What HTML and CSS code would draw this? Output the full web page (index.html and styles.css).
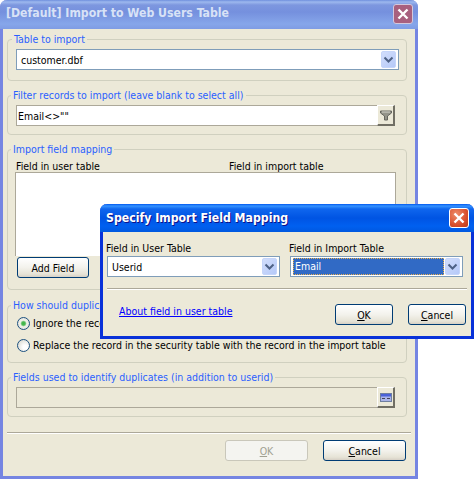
FILE: index.html
```html
<!DOCTYPE html>
<html lang="en">
<head>
<meta charset="utf-8">
<title>Import to Web Users Table</title>
<link rel="stylesheet" href="styles.css">
</head>
<body>
<div class="window">
  <header class="titlebar">
    <span class="title">[Default] Import to Web Users Table</span>
    <span class="close close-inactive"><svg width="14" height="14" viewBox="0 0 14 14"><path d="M2.5 2.5l9 9M11.5 2.5l-9 9" stroke="#fff" stroke-width="2.4" fill="none"/></svg></span>
  </header>
  <main class="content">
    <fieldset class="group g-table">
      <legend>Table to import</legend>
      <div class="combo combo-wide">
        <span class="value">customer.dbf</span>
        <span class="arrow"><svg width="11" height="8" viewBox="0 0 11 8"><path d="M1.5 1.5l4 4 4-4" stroke="#4d6185" stroke-width="2" fill="none"/></svg></span>
      </div>
    </fieldset>
    <fieldset class="group g-filter">
      <legend>Filter records to import (leave blank to select all)</legend>
      <div class="field">
        <span class="value">Email&lt;&gt;""</span>
        <span class="tool"><svg width="12" height="11" viewBox="0 0 12 11"><path d="M0.500 1h11v2L7.500 6v4h-3V6L0.500 3z" fill="#94948a" stroke="#66665e"/><path d="M2 2h8" stroke="#d6d6cc"/></svg></span>
      </div>
    </fieldset>
    <fieldset class="group g-map">
      <legend>Import field mapping</legend>
      <div class="map-head"><span class="map-col">Field in user table</span><span>Field in import table</span></div>
      <div class="listbox"></div>
      <button class="btn btn-add" type="button">Add Field</button>
    </fieldset>
    <fieldset class="group g-dup">
      <legend>How should duplicate records be handled?</legend>
      <label class="option"><input class="radio" type="radio" name="dup" checked>Ignore the record in the import table</label>
      <label class="option"><input class="radio" type="radio" name="dup">Replace the record in the security table with the record in the import table</label>
    </fieldset>
    <fieldset class="group g-fields">
      <legend>Fields used to identify duplicates (in addition to userid)</legend>
      <div class="field field-off">
        <span class="value"></span>
        <span class="tool"><svg width="12" height="9" viewBox="0 0 12 9"><rect x="0.500" y="0.500" width="11" height="8" fill="#aab4e8" stroke="#6f7f9f"/><rect x="1" y="1" width="10" height="2.500" fill="#4a62d8"/><path d="M2 5.500h3M7 5.500h3" stroke="#445" stroke-width="1"/></svg></span>
      </div>
    </fieldset>
    <div class="divider"></div>
    <div class="actions">
      <button class="btn btn-main" type="button" disabled><u>O</u>K</button>
      <button class="btn btn-main" type="button"><u>C</u>ancel</button>
    </div>
  </main>

  <section class="dialog">
    <header class="dlg-title">
      <span class="dlg-name">Specify Import Field Mapping</span>
      <span class="close close-active"><svg width="14" height="14" viewBox="0 0 14 14"><path d="M2.500 2.500l9 9M11.500 2.500l-9 9" stroke="#fff" stroke-width="2.400" fill="none"/></svg></span>
    </header>
    <div class="dlg-body">
      <div class="dlg-cols">
        <div class="dlg-col">
          <div class="dlg-label">Field in User Table</div>
          <div class="combo combo-dlg">
            <span class="value">Userid</span>
            <span class="arrow"><svg width="11" height="8" viewBox="0 0 11 8"><path d="M1.500 1.500l4 4 4-4" stroke="#4d6185" stroke-width="2" fill="none"/></svg></span>
          </div>
        </div>
        <div class="dlg-col">
          <div class="dlg-label">Field in Import Table</div>
          <div class="combo combo-dlg">
            <span class="value value-sel">Email</span>
            <span class="arrow"><svg width="11" height="8" viewBox="0 0 11 8"><path d="M1.500 1.500l4 4 4-4" stroke="#4d6185" stroke-width="2" fill="none"/></svg></span>
          </div>
        </div>
      </div>
      <div class="divider dlg-divider"></div>
      <div class="dlg-foot">
        <a class="link" href="#">About field in user table</a>
        <button class="btn btn-dlg" type="button"><u>O</u>K</button>
        <button class="btn btn-dlg" type="button"><u>C</u>ancel</button>
      </div>
    </div>
  </section>
</div>
</body>
</html>
```
FILE: styles.css
```css
* { box-sizing: border-box; }
html, body { margin: 0; padding: 0; background: #fff; }
body {
  width: 474px;
  height: 479px;
  overflow: hidden;
  font-family: "DejaVu Sans Condensed", "DejaVu Sans", sans-serif;
  font-stretch: condensed;
  font-size: 10.500px;
  line-height: 14px;
  color: #000;
}
.window {
  position: relative;
  width: 418px;
  height: 479px;
  background: #ecE9d8;
  border: 3px solid #7585e2;
  border-top: 0;
  border-radius: 7px 7px 0 0;
}
.titlebar {
  display: flex;
  align-items: center;
  justify-content: space-between;
  height: 29px;
  margin: 0 -3px;
  padding: 0 5px 3px 6px;
  border-radius: 7px 7px 0 0;
  background: linear-gradient(#6f8fdd 0, #9db8ee 2px, #7d97df 5px, #7590de 12px, #86a6ea 24px, #7f9ce4 29px);
}
.title {
  font-weight: bold;
  font-size: 12.200px;
  color: #d8e2f6;
}
.close {
  display: flex;
  align-items: center;
  justify-content: center;
  width: 20px;
  height: 20px;
  border: 1px solid #e6e6f4;
  border-radius: 3px;
}
.close-inactive { background: #a8607e; border-color: #d3c8dc; margin-top: 2px; }
.close-active {
  background: radial-gradient(circle at 35% 30%, #ee8e6c, #d9502e 60%, #b93a18);
  border-color: #fff;
}
.content {
  display: flex;
  flex-direction: column;
  padding: 3px 0 0 4px;
}
.group {
  width: 400px;
  margin: 0 0 7px;
  padding: 3px 8px 0;
  min-width: 0;
  border: 1px solid #d0d0bf;
  border-radius: 4px;
}
.group legend {
  margin-left: -5px;
  padding: 0 2px;
  color: #2b5fff;
}
.g-table { height: 49px; }
.g-table legend { margin-left: -4px; }
.g-filter { height: 47px; }
.g-map { height: 148px; margin-bottom: 8px; padding-top: 3px; }
.g-dup { height: 65px; padding-top: 4px; }
.g-fields { height: 47px; }
.combo, .field {
  display: flex;
  align-items: center;
  height: 21px;
  background: #fff;
}
.combo {
  border: 1px solid #7f9db9;
  padding: 1px;
}
.combo-wide { width: 383px; }
.combo-dlg { width: 173px; }
.field {
  width: 379px;
  border: 1px solid #aca899;
  border-right: 0;
  border-bottom-width: 1px;
}
.field-off { background: #ece9d8; }
.value {
  flex: 1;
  padding-left: 3px;
  font-size: 10.500px;
}
.g-filter .value { padding-left: 1px; }
.arrow {
  display: flex;
  align-items: center;
  justify-content: center;
  width: 15px;
  height: 17px;
  margin-right: 1px;
  border-radius: 2px;
  background: linear-gradient(135deg, #d2defc, #b5c9f8);
  border: 1px solid #c5d5fa;
}
.tool {
  display: flex;
  align-items: center;
  justify-content: center;
  align-self: stretch;
  width: 18px;
  margin: -1px 0 -1px;
  background: #ece9d8;
  border-style: solid;
  border-width: 1px 2px 2px 1px;
  border-color: #fff #716f64 #716f64 #fff;
}
.map-head {
  display: flex;
  height: 14px;
  margin: -1px 0 0;
  line-height: 16px;
}
.map-col { width: 213px; }
.listbox {
  width: 381px;
  height: 84px;
  margin-left: -1px;
  background: #fff;
  border: 1px solid #aca899;
  border-bottom: 0;
}
.btn {
  font: inherit;
  font-size: 10.500px;
  color: #000;
  height: 21px;
  padding: 0;
  border: 1px solid #003c74;
  border-radius: 3px;
  background: linear-gradient(#fff, #f3f2ec 50%, #e6e3d6 85%, #d6d0c5);
}
.btn-add { width: 72px; margin-top: 1px; margin-left: 1px; }
.option {
  display: flex;
  align-items: center;
  gap: 3px;
  height: 14px;
  margin-bottom: 8px;
  white-space: nowrap;
}
.radio {
  appearance: none;
  flex: none;
  width: 13px;
  height: 13px;
  margin: 0 0 0 1px;
  border: 1px solid #1c5180;
  border-radius: 50%;
  background: radial-gradient(circle at 65% 65%, #fff 20%, #dcdcd4 80%);
}
.radio:checked {
  background: radial-gradient(circle at 50% 50%, #3fb548 0, #4ab852 22%, #f2f2ec 42%, #dcdcd4 90%);
}
.divider {
  height: 2px;
  background: #aca899;
  border-bottom: 1px solid #fff;
  width: 404px;
  margin-top: 8px;
}
.actions {
  display: flex;
  justify-content: flex-end;
  gap: 15px;
  margin-top: 6px;
  padding-right: 5px;
  width: 404px;
}
.btn-main { width: 83px; }
.btn-main:disabled {
  color: #a1a192;
  border-color: #c9c7ba;
  background: #f4f4f0;
}
.dialog {
  position: absolute;
  left: 97px;
  top: 204px;
  width: 374px;
  height: 135px;
  background: #ece9d8;
  border: 3px solid #0831d9;
  border-top: 0;
  border-radius: 7px 7px 0 0;
}
.dlg-title {
  display: flex;
  align-items: center;
  justify-content: space-between;
  height: 28px;
  margin: 0 -3px;
  padding: 0 5px 0 6px;
  border-radius: 7px 7px 0 0;
  background: linear-gradient(#0058ee 0, #3593ff 2px, #0f66ee 5px, #0054e3 14px, #0060f0 22px, #0058e0 28px);
}
.dlg-name {
  font-weight: bold;
  font-size: 12.200px;
  color: #fff;
  text-shadow: 1px 1px 0 #0f1089;
}
.dlg-body {
  padding: 9px 5px 0 3px;
}
.dlg-cols {
  display: grid;
  grid-template-columns: 183px 173px;
}
.dlg-col .combo { margin-left: 1px; }
.dlg-label { height: 15px; }
.value-sel {
  flex: 1;
  margin: 0 1px 0 1px;
  padding-left: 1px;
  height: 17px;
  line-height: 15px;
  color: #fff;
  background: #316ac5;
  border: 1px dotted #e8b050;
}
.dlg-divider {
  width: 360px;
  margin: 11px 0 0 1px;
}
.dlg-foot {
  display: flex;
  align-items: flex-start;
  gap: 15px;
  margin-top: 14px;
}
.link {
  color: #0000ff;
  margin-left: 13px;
  margin-right: auto;
  white-space: nowrap;
}
.btn-dlg { flex: none; width: 58px; }
```
